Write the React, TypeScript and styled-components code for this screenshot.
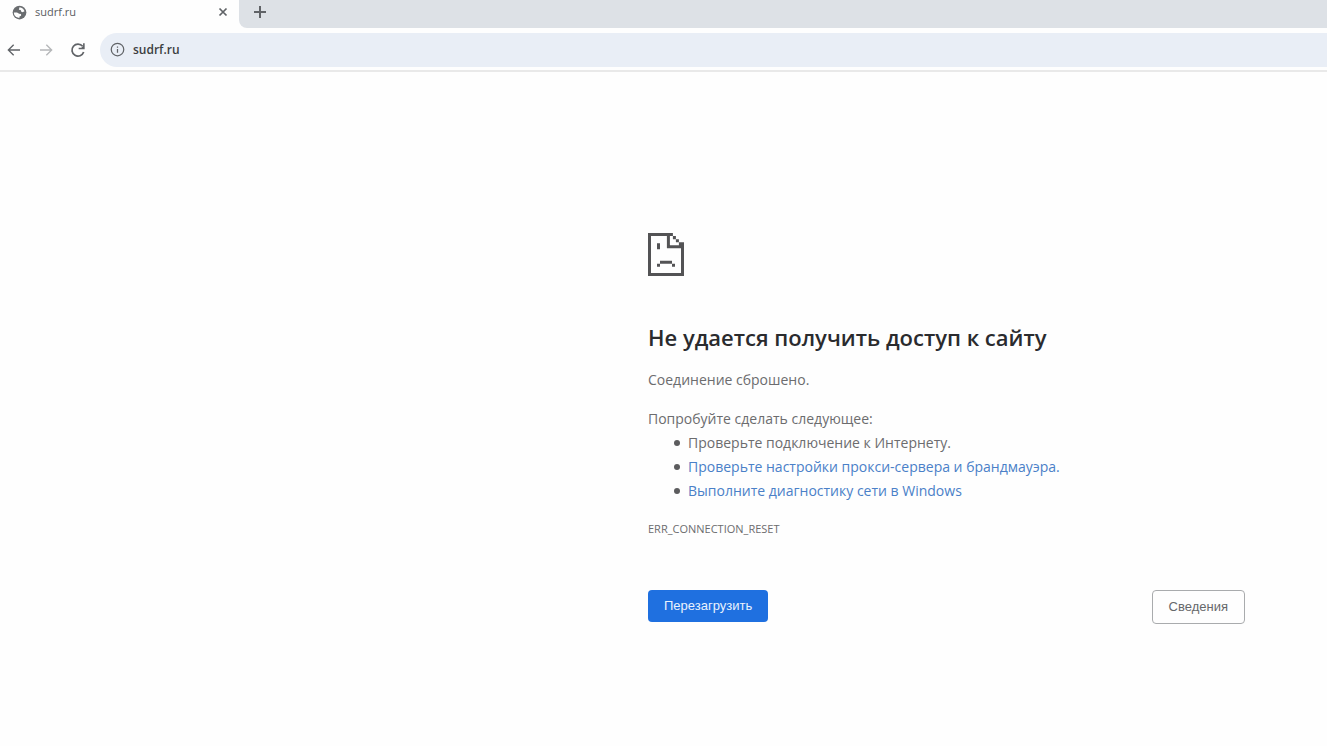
import React from "react";
import styled, { createGlobalStyle } from "styled-components";

const Global = createGlobalStyle`
  * { box-sizing: border-box; }
  body { margin: 0; background: #fefefe; font-family: "Open Sans", "Noto Sans", sans-serif; color: #6c6c6e; }
`;

const TabStrip = styled.header`
  display: flex;
  height: 28px;
  background: #dde1e6;
`;

const Tab = styled.div`
  display: flex;
  align-items: center;
  width: 239px;
  height: 28px;
  padding: 0 9px 4px 12px;
  background: #fefefe;
`;

const TabTitle = styled.span`
  flex: 1;
  margin-left: 8px;
  font-size: 11px;
  line-height: 16px;
  color: #5a5c5f;
`;

const StripRest = styled.div`
  display: flex;
  flex: 1;
  padding: 4px 0 0 13px;
  background: #dde1e6;
  border-bottom-left-radius: 8px;
`;

const StripBase = styled.div`
  display: flex;
  flex: 1;
  background: #fefefe;
`;

const IconButton = styled.button<{ $size: number }>`
  display: flex;
  align-items: center;
  justify-content: center;
  width: ${(p) => p.$size}px;
  height: ${(p) => p.$size}px;
  padding: 0;
  border: 0;
  background: none;
  color: #606367;
  &:disabled { color: #b5b7b9; }
`;

const Toolbar = styled.nav`
  display: flex;
  align-items: center;
  gap: 16px;
  height: 44px;
  padding: 1px 0 0 6px;
  border-bottom: 2px solid #e9e9e9;
`;

const AddressBar = styled.label`
  display: flex;
  align-items: center;
  flex: 1;
  gap: 8px;
  height: 34px;
  margin-left: -2px;
  padding-left: 10px;
  border-radius: 17px 0 0 17px;
  background: #e9eef6;
  color: #606367;
`;

const AddressInput = styled.input`
  flex: 1;
  min-width: 0;
  padding: 0;
  border: 0;
  outline: 0;
  background: none;
  font: 600 12px/18px "Open Sans", sans-serif;
  color: #3c3e41;
`;

const ErrorPage = styled.main`
  max-width: 597px;
  margin: 161px 82px 0 auto;
  font-size: 14px;
  line-height: 24px;
`;

const Title = styled.h1`
  margin: 43px 0 13px;
  font-size: 22px;
  font-weight: 600;
  line-height: 36px;
  color: #2a2b2e;
`;

const Paragraph = styled.p`
  margin: 0 0 15px;
`;

const Suggestions = styled.section`
  p { margin: 0; }
`;

const List = styled.ul`
  margin: 0;
  padding-left: 26px;
  list-style: none;
`;

const Suggestion = styled.li`
  display: flex;
  align-items: center;
  gap: 8px;
  &::before {
    content: "";
    width: 6px;
    height: 6px;
    border-radius: 50%;
    background: #5c5c5e;
  }
`;

const Link = styled.a`
  color: #4a80c8;
  text-decoration: none;
`;

const ErrorCode = styled.p`
  margin: 14px 0 0;
  font-size: 11px;
  line-height: 24px;
`;

const Actions = styled.div`
  display: flex;
  justify-content: space-between;
  align-items: flex-start;
  margin-top: 49px;
`;

const Button = styled.button<{ $primary?: boolean }>`
  height: ${(p) => (p.$primary ? 32 : 34)}px;
  padding: 0 16px;
  border: ${(p) => (p.$primary ? "0" : "1px solid #a9abad")};
  border-radius: 4px;
  background: ${(p) => (p.$primary ? "#1f70e0" : "#fefefe")};
  color: ${(p) => (p.$primary ? "#eaf2fd" : "#66686b")};
  font: 13px/16px "Liberation Sans", Arial, sans-serif;
`;

const Globe = () => (
  <svg width="15" height="15" viewBox="0 0 24 24" aria-hidden="true">
    <circle cx="12" cy="12" r="11" fill="#6a6d70" />
    <path d="M12 3.500c4 .3 7 3 8 6.500l-3 1.500-2.500-1 -.5-2.500-3-.5zM3 12h5l3.500 2 3 .5v2.500l-2.500 1.500v2C6.500 20.300 3 17 3 12z" fill="#fefefe" />
  </svg>
);

const Stroke = ({ size, d, width = 2 }: { size: number; d: string; width?: number }) => (
  <svg width={size} height={size} viewBox="0 0 24 24" fill="none" stroke="currentColor" strokeWidth={width} aria-hidden="true">
    <path d={d} />
  </svg>
);

const Reload = () => (
  <svg width="16" height="16" viewBox="0 0 24 24" fill="none" aria-hidden="true">
    <path d="M20.500 15A9 9 0 1 1 19 6.500" stroke="currentColor" strokeWidth="2.600" />
    <path d="M22 2v9h-9v-2.400h4L19.600 6V2z" fill="currentColor" />
  </svg>
);

const SadPage = () => (
  <svg width="36" height="43" viewBox="0 0 12 14" preserveAspectRatio="none" fill="#535355" display="block" role="img" aria-label="Ошибка">
    <path d="M0 0h8.300v1H1v12h10V5H6.300V1h1v3H11V3h1v11H0zM8.300 1h1v1h-1zM9.300 2h1v1h-1zM10.300 3h1v1h-1zM3 3.300h1v2H3zM4 9h4v1H4zM3 10h1v1H3zM8 10h1v1H8z" />
  </svg>
);

export default function App() {
  return (
    <>
      <Global />
      <TabStrip>
        <Tab>
          <Globe />
          <TabTitle>sudrf.ru</TabTitle>
          <IconButton $size={14} aria-label="Закрыть вкладку">
            <Stroke size={14} width={3} d="M6 6l12 12M18 6L6 18" />
          </IconButton>
        </Tab>
        <StripBase>
          <StripRest>
            <IconButton $size={16} aria-label="Новая вкладка">
              <Stroke size={16} width={3} d="M12 3v18M3 12h18" />
            </IconButton>
          </StripRest>
        </StripBase>
      </TabStrip>
      <Toolbar>
        <IconButton $size={16} aria-label="Назад">
          <Stroke size={16} d="M21 12H4M11.500 4L3.500 12l8 8" />
        </IconButton>
        <IconButton $size={16} aria-label="Вперёд" disabled>
          <Stroke size={16} d="M3 12h17M12.500 4l8 8-8 8" />
        </IconButton>
        <IconButton $size={16} aria-label="Обновить">
          <Reload />
        </IconButton>
        <AddressBar>
          <Stroke size={15} d="M12 2a10 10 0 1 0 0 20a10 10 0 1 0 0-20M12 11v6M12 7v2" />
          <AddressInput aria-label="Адрес" defaultValue="sudrf.ru" />
        </AddressBar>
      </Toolbar>
      <ErrorPage>
        <SadPage />
        <Title>Не удается получить доступ к сайту</Title>
        <Paragraph>Соединение сброшено.</Paragraph>
        <Suggestions>
          <p>Попробуйте сделать следующее:</p>
          <List>
            <Suggestion>Проверьте подключение к Интернету.</Suggestion>
            <Suggestion><Link href="#proxy">Проверьте настройки прокси-сервера и брандмауэра.</Link></Suggestion>
            <Suggestion><Link href="#diagnostics">Выполните диагностику сети в Windows</Link></Suggestion>
          </List>
        </Suggestions>
        <ErrorCode>ERR_CONNECTION_RESET</ErrorCode>
        <Actions>
          <Button $primary>Перезагрузить</Button>
          <Button>Сведения</Button>
        </Actions>
      </ErrorPage>
    </>
  );
}
